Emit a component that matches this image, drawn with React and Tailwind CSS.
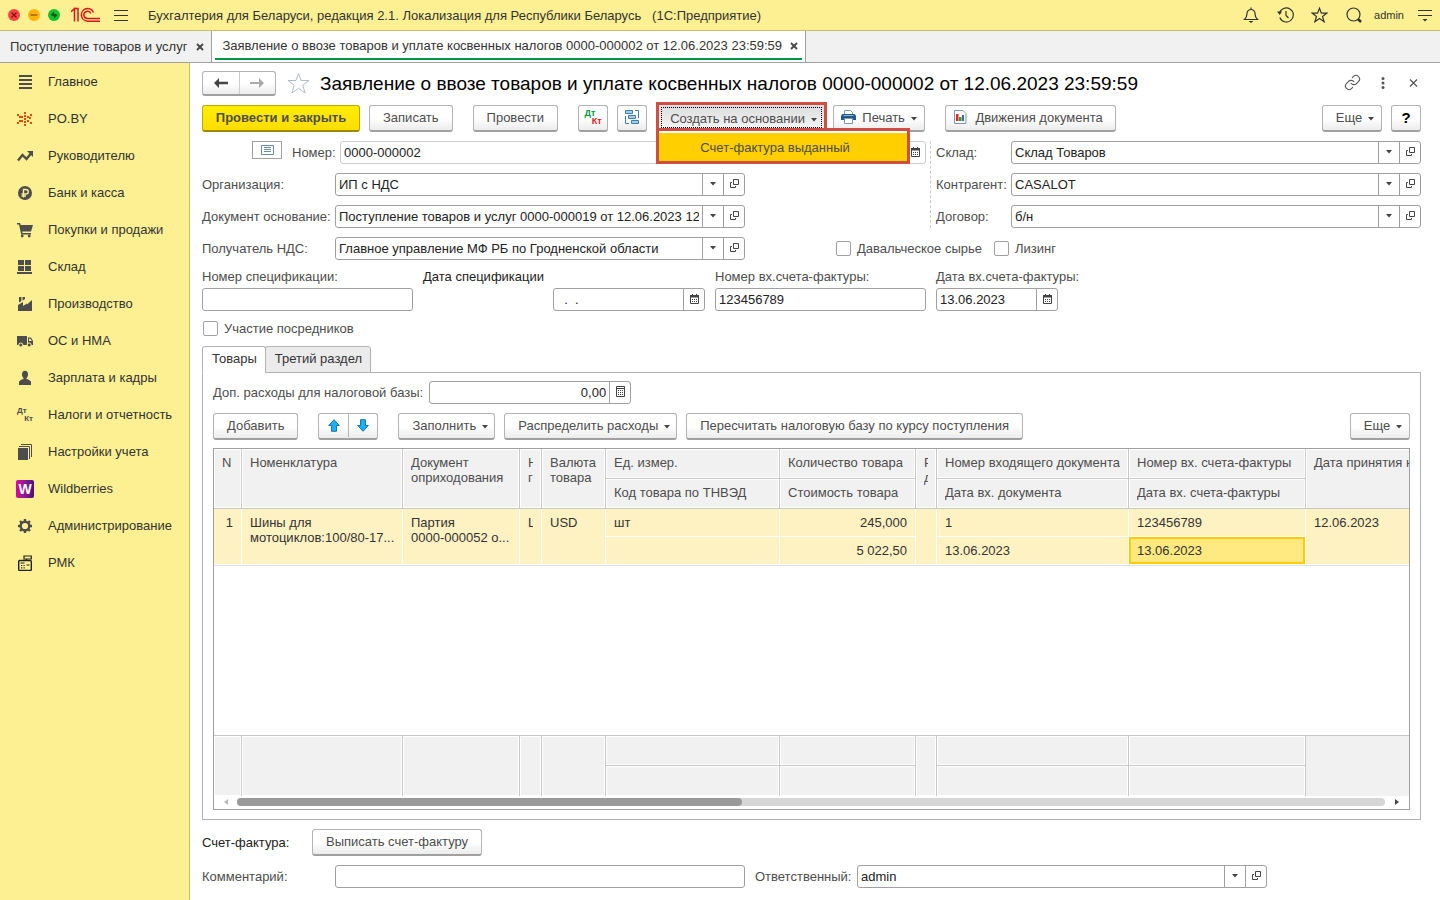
import React, { useState } from "react";
import { Link } from "lucide-react";
import clsx from "clsx";

const BUTTON =
  "flex h-[27px] shrink-0 items-center justify-center whitespace-nowrap rounded-[3px] border border-b-2 border-[#b3b3b3] border-b-[#a0a0a0] bg-linear-to-b from-white from-50% to-[#ececec] pb-0.5 text-[#4d4d4d]";

const MENU = [
  { label: "Главное", icon: "main" },
  { label: "PO.BY", icon: "poby" },
  { label: "Руководителю", icon: "trend" },
  { label: "Банк и касса", icon: "bank" },
  { label: "Покупки и продажи", icon: "cart" },
  { label: "Склад", icon: "stock" },
  { label: "Производство", icon: "factory" },
  { label: "ОС и НМА", icon: "truck" },
  { label: "Зарплата и кадры", icon: "person" },
  { label: "Налоги и отчетность", icon: "tax" },
  { label: "Настройки учета", icon: "books" },
  { label: "Wildberries", icon: "wb" },
  { label: "Администрирование", icon: "gear" },
  { label: "РМК", icon: "cash" },
];

const PO_DOTS = [
  [7, 1], [7, 4], [7, 7], [7, 10], [7, 13],
  [4, 5], [4, 9], [10, 5], [10, 9],
  [0, 3], [2, 5], [0, 11], [2, 9], [13, 3], [12, 6], [13, 11],
];

const ICONS = {
  main: <path d="M2 2h13M2 6h13M2 10h13M2 14h13" stroke="#4d4d4d" strokeWidth="2" />,
  poby: PO_DOTS.map(([x, y]) => (
    <rect key={`${x}-${y}`} x={x} y={y} width="2" height="2" fill="#e8470a" />
  )),
  trend: (
    <>
      <path d="M1 12.500 5.500 7l4 4 4-5" fill="none" stroke="#4d4d4d" strokeWidth="2.400" />
      <path d="M10 3h6v6z" fill="#4d4d4d" />
    </>
  ),
  bank: (
    <>
      <circle cx="8" cy="8" r="7" fill="#4d4d4d" />
      <path d="M6.500 12.500v-8H9a2.200 2.200 0 0 1 0 4.500H4.500M4.500 11H9" fill="none" stroke="#fcf092" strokeWidth="1.400" />
    </>
  ),
  cart: (
    <>
      <path d="M0 1h3l.700 2H16l-2 6.500H5.200l.300 1.500H14v1.500H4.200L2 2.600H0z" fill="#4d4d4d" />
      <circle cx="5.200" cy="14" r="1.400" fill="#4d4d4d" />
      <circle cx="12.200" cy="14" r="1.400" fill="#4d4d4d" />
    </>
  ),
  stock: <path d="M1 1h6v5H1zM8 1h6v5H8zM1 7h6v5H1zM8 7h6v5H8zM0 13h15v2H0z" fill="#4d4d4d" />,
  factory: <path d="M1 15V9l5-3v4l4-2.500v1L15 4v11zM2 1h2.400v4L2 6.500zM5.500 1H8v2L5.500 4.600z" fill="#4d4d4d" />,
  truck: (
    <>
      <path d="M0 3h10v9H0zM11 4.500h3l2 3.500v4h-5z" fill="#4d4d4d" />
      <path d="M12 5.700h1.500l1.300 2.300H12z" fill="#fcf092" />
      <circle cx="3.800" cy="12" r="2" fill="#4d4d4d" stroke="#fcf092" />
      <circle cx="12.200" cy="12" r="2" fill="#4d4d4d" stroke="#fcf092" />
    </>
  ),
  person: (
    <>
      <ellipse cx="8" cy="4.500" rx="3" ry="3.700" fill="#4d4d4d" />
      <path d="M6.500 7h3v3h-3z" fill="#4d4d4d" />
      <path d="M2 15v-3.500L5 9.200h6l3 2.300V15z" fill="#4d4d4d" />
    </>
  ),
  books: (
    <>
      <path d="M1 4h10v12H1z" fill="#4d4d4d" />
      <path d="M2 2.500h10.500V15M4 .500h10.500V13" fill="none" stroke="#4d4d4d" />
    </>
  ),
  gear: (
    <>
      <circle cx="8" cy="8" r="4.300" fill="none" stroke="#4d4d4d" strokeWidth="2.400" />
      <path
        d="M8 1v3M8 12v3M1 8h3M12 8h3M3 3l2 2M11 11l2 2M3 13l2-2M11 5l2-2"
        stroke="#4d4d4d"
        strokeWidth="2.400"
      />
    </>
  ),
  cash: (
    <>
      <rect x="1.700" y="5.500" width="12.600" height="10" rx="1" fill="none" stroke="#222" strokeWidth="1.400" />
      <path d="M7 1h7.300v3H7zM9.500 5.500V4M3.500 8h4" fill="none" stroke="#222" strokeWidth="1.200" />
      <path d="M4 10.500h1.200M6.500 10.500h1.200M4 12.800h1.200M6.500 12.800h1.200M9.500 10h3" stroke="#222" strokeWidth="1.200" />
    </>
  ),
};

function MenuIcon({ name }) {
  if (name === "wb") {
    return (
      <span className="flex size-[18px] items-center justify-center rounded-xs bg-linear-to-r from-[#d800a0] to-[#4b0b7c] text-[14px] leading-none font-bold text-white">
        W
      </span>
    );
  }
  if (name === "tax") {
    return (
      <span className="flex w-4 flex-col text-[8px] leading-[8px] font-bold text-[#4d4d4d]">
        <span>Дт</span>
        <span className="self-end">Кт</span>
      </span>
    );
  }
  return (
    <svg width="16" height="16" viewBox="0 0 16 16">
      {ICONS[name]}
    </svg>
  );
}

function Caret({ className }) {
  return (
    <svg width="6" height="4" viewBox="0 0 6 4" className={clsx("shrink-0", className)}>
      <path d="M0 0h6L3 3.500z" fill="#444" />
    </svg>
  );
}

function OpenIcon() {
  return (
    <svg width="9" height="9" viewBox="0 0 9 9" fill="none" stroke="#444">
      <path d="M3.500.500h5v5h-5zM2 3.500H.500v5h5V7" />
    </svg>
  );
}

function CalendarIcon() {
  return (
    <svg width="9" height="10" viewBox="0 0 9 10">
      <path d="M.500 1.500h8v8h-8z" fill="none" stroke="#444" />
      <path d="M0 1h9v2.500H0zM2 0h1v2H2zM6 0h1v2H6z" fill="#444" />
      <path d="M2 5.500h5M2 7.500h5" stroke="#444" strokeDasharray="1 1" />
    </svg>
  );
}

function CalculatorIcon() {
  return (
    <svg width="9" height="11" viewBox="0 0 9 11" fill="none" stroke="#444">
      <path d="M.500.500h8v10h-8zM1 2.500h7" />
      <path d="M2 4.500h5M2 6.500h5M2 8.500h5" strokeDasharray="1 1" />
    </svg>
  );
}

const FIELD_ICONS = {
  list: { label: "Выбрать", node: <Caret /> },
  open: { label: "Открыть", node: <OpenIcon /> },
  calendar: { label: "Календарь", node: <CalendarIcon /> },
  calculator: { label: "Калькулятор", node: <CalculatorIcon /> },
};

function Field({ id, value = "", icons = [], className, inputClass }) {
  const [text, setText] = useState(value);

  return (
    <div className={clsx("flex h-[23px] rounded-[3px] border bg-white", className)}>
      <input
        id={id}
        value={text}
        onChange={(e) => setText(e.target.value)}
        className={clsx("w-0 min-w-0 flex-1 bg-transparent text-[#222] outline-none", inputClass || "px-[3px]")}
      />
      {icons.map((icon) => (
        <button
          key={icon}
          aria-label={FIELD_ICONS[icon].label}
          className="flex w-[21px] shrink-0 items-center justify-center border-l border-[#a0a0a0] pb-0.5"
        >
          {FIELD_ICONS[icon].node}
        </button>
      ))}
    </div>
  );
}

function LabeledRow({ id, label, value, labelClass = "w-[133px]", fieldClass = "w-[410px]" }) {
  return (
    <div className="flex items-center">
      <label htmlFor={id} className={clsx("shrink-0 whitespace-nowrap", labelClass)}>
        {label}
      </label>
      <Field id={id} value={value} icons={["list", "open"]} className={clsx("border-[#a0a0a0]", fieldClass)} />
    </div>
  );
}

function Checkbox({ label }) {
  return (
    <label className="flex items-center gap-1.5 pl-px">
      <input type="checkbox" className="size-[15px] appearance-none rounded-xs border border-[#a0a0a0] bg-white checked:bg-[#ffcc00]" />
      {label}
    </label>
  );
}

function MoreButton() {
  return (
    <button className={clsx(BUTTON, "w-15 gap-1.5 pl-1.5")}>
      Еще <Caret className="mt-1" />
    </button>
  );
}

function TopBar() {
  return (
    <header className="flex h-[31px] items-center border-b border-[#c9bd6a] bg-[#fcf092] pr-2 pl-2 text-[#333]">
      <div className="flex gap-2">
        <button aria-label="Закрыть" className="size-3 rounded-full bg-[#fb4646]">
          <svg viewBox="0 0 12 12">
            <path d="m3.500 3.500 5 5m0-5-5 5" stroke="#8c0d0d" strokeWidth="1.400" />
          </svg>
        </button>
        <button aria-label="Свернуть" className="size-3 rounded-full bg-[#fdb40a]">
          <svg viewBox="0 0 12 12">
            <path d="M2.500 6h7" stroke="#a35f00" strokeWidth="1.500" />
          </svg>
        </button>
        <button aria-label="Развернуть" className="size-3 rounded-full bg-[#12c132]">
          <svg viewBox="0 0 12 12">
            <path d="M6 2.500v5L2.500 6zM6 9.500v-5L9.500 6z" fill="#05560f" />
          </svg>
        </button>
      </div>
      <svg width="30" height="16" viewBox="0 0 30 16" className="ml-[11px]" fill="none" stroke="#e2121a" strokeWidth="1.500">
        <path d="M0 4.800 3.500 1.700V14.500M3.500 5V1.500H7v13" />
        <path d="M22.500 5.500A6.300 6.300 0 1 0 16.500 14.200H29M19.800 6.500A3.600 3.600 0 1 0 16.500 11.500H29" />
      </svg>
      <button aria-label="Меню" className="ml-[13px]">
        <svg width="14" height="12" viewBox="0 0 14 12">
          <path d="M0 1.500h14M0 6.500h14M0 11.500h14" stroke="#333" />
        </svg>
      </button>
      <span className="ml-5 whitespace-pre">
        Бухгалтерия для Беларуси, редакция 2.1. Локализация для Республики Беларусь   (1С:Предприятие)
      </span>
      <div className="ml-auto flex items-center">
        <button aria-label="Уведомления">
          <svg width="16" height="16" viewBox="0 0 16 16" fill="none" stroke="#333" strokeWidth="1.200">
            <path d="M1.500 12.500h13c-2-2-2.500-3-2.500-6a4 4 0 0 0-8 0c0 3-.500 4-2.500 6zM8 .500v2" />
            <path d="M5.500 14h5L8 16z" fill="#333" stroke="none" />
          </svg>
        </button>
        <button aria-label="История" className="ml-[18px]">
          <svg width="17" height="16" viewBox="0 0 17 16" fill="none" stroke="#333" strokeWidth="1.200">
            <path d="M2.500 6.500a7 7 0 1 1 .300 4M9 4v4.500l2.500 2.500" />
            <path d="M0 4.500h5L2.700 8z" fill="#333" stroke="none" />
          </svg>
        </button>
        <button aria-label="Избранное" className="ml-[17px]">
          <svg width="17" height="16" viewBox="0 0 17 16" fill="none" stroke="#333" strokeWidth="1.200">
            <path d="m8.500 1.200 1.900 5h5.300l-4.200 3.300 1.600 5.200-4.600-3.200-4.600 3.200 1.600-5.200L1.300 6.200h5.300z" />
          </svg>
        </button>
        <button aria-label="Поиск" className="ml-[18px]">
          <svg width="16" height="16" viewBox="0 0 16 16" fill="none" stroke="#333" strokeWidth="1.200">
            <circle cx="7.500" cy="7.500" r="6.500" />
            <path d="m12 12 3 3" strokeWidth="2.500" />
          </svg>
        </button>
        <span className="ml-3 text-[11px]">admin</span>
        <button aria-label="Настройки" className="ml-3.5">
          <svg width="14" height="14" viewBox="0 0 14 14">
            <path d="M0 2.500h14M0 7.500h14" stroke="#333" />
            <path d="M4.500 11h5L7 13.500z" fill="#333" />
          </svg>
        </button>
      </div>
    </header>
  );
}

function WindowTabs() {
  return (
    <nav className="flex h-8 border-b border-[#a0a0a0] bg-[#f1f1f1] text-[#333]">
      <div className="flex items-center gap-[9px] border-r border-[#a0a0a0] pr-[7px] pl-2.5">
        <a href="#receipt">Поступление товаров и услуг</a>
        <CloseTab />
      </div>
      <div className="flex border-r border-[#a0a0a0] bg-white px-[3px]">
        <div className="mb-0.5 flex items-center gap-2 border-b-2 border-[#009646] pt-0.5 pr-1 pl-[7px]">
          <a href="#statement">
            Заявление о ввозе товаров и уплате косвенных налогов 0000-000002 от 12.06.2023 23:59:59
          </a>
          <CloseTab />
        </div>
      </div>
    </nav>
  );
}

function CloseTab() {
  return (
    <button aria-label="Закрыть вкладку">
      <svg width="8" height="8" viewBox="0 0 8 8">
        <path d="m1 1 6 6m0-6L1 7" stroke="#444" strokeWidth="1.800" />
      </svg>
    </button>
  );
}

function Sidebar() {
  return (
    <aside className="w-[190px] shrink-0 border-r border-[#c9bd6a] bg-[#fcf092]">
      <ul>
        {MENU.map((item) => (
          <li key={item.label}>
            <a href="#section" className="flex h-[37px] items-center text-[#333]">
              <span className="flex w-12 items-center justify-center pl-0.5">
                <MenuIcon name={item.icon} />
              </span>
              {item.label}
            </a>
          </li>
        ))}
      </ul>
    </aside>
  );
}

function TitleRow() {
  return (
    <div className="flex h-[25px] items-center">
      <div className="flex h-[25px] w-[74px] shrink-0 rounded-[3px] border border-b-2 border-[#b3b3b3] border-b-[#a0a0a0] bg-linear-to-b from-white from-50% to-[#ececec]">
        <button aria-label="Назад" className="flex flex-1 items-center justify-center border-r border-[#ccc]">
          <svg width="14" height="10" viewBox="0 0 14 10">
            <path d="M0 5 5 0v3.800h9v2.400H5V10z" fill="#444" />
          </svg>
        </button>
        <button aria-label="Вперед" className="flex flex-1 items-center justify-center">
          <svg width="14" height="10" viewBox="0 0 14 10">
            <path d="M14 5 9 0v4H0v2h9v4z" fill="#aaa" />
          </svg>
        </button>
      </div>
      <button aria-label="В избранное" className="ml-[11px] shrink-0">
        <svg width="23" height="23" viewBox="0 0 23 23" fill="none" stroke="#b4bcc6">
          <path d="m11.500 1.500 2.600 7h7.900l-6.200 4.700 2.300 7.800-6.600-4.700L4.900 21l2.300-7.800L1 8.500h7.900z" />
        </svg>
      </button>
      <h1 className="ml-2.5 text-[19px] leading-[25px] whitespace-nowrap text-black">
        Заявление о ввозе товаров и уплате косвенных налогов 0000-000002 от 12.06.2023 23:59:59
      </h1>
      <div className="ml-auto flex items-center pr-[3px] pb-0.5 text-[#555]">
        <button aria-label="Ссылка">
          <Link size={17} strokeWidth={1.5} />
        </button>
        <button aria-label="Действия" className="ml-5">
          <svg width="4" height="12" viewBox="0 0 4 12" fill="#555">
            <circle cx="2" cy="1.500" r="1.500" />
            <circle cx="2" cy="6" r="1.500" />
            <circle cx="2" cy="10.500" r="1.500" />
          </svg>
        </button>
        <button aria-label="Закрыть форму" className="ml-6">
          <svg width="9" height="8" viewBox="0 0 9 8">
            <path d="m1 .500 7 7m0-7-7 7" stroke="#555" strokeWidth="1.200" />
          </svg>
        </button>
      </div>
    </div>
  );
}

function CommandBar() {
  const [isOpen, setIsOpen] = useState(true);

  return (
    <div className="mt-[9px] flex h-[27px] gap-[9px]">
      <button className="flex h-[27px] w-[158px] shrink-0 items-center justify-center rounded-[3px] border border-b-2 border-[#bba800] border-b-[#998a00] bg-linear-to-b from-[#ffee00] to-[#ffdd00] pb-0.5 font-bold text-[#4d4d4d]">
        Провести и закрыть
      </button>
      <button className={clsx(BUTTON, "px-[13px]")}>Записать</button>
      <button className={clsx(BUTTON, "ml-[11px] px-[13px]")}>Провести</button>
      <button aria-label="Дт Кт" className={clsx(BUTTON, "ml-[11px] w-[30px]")}>
        <span className="flex w-[17px] flex-col text-[9px] leading-[8px] font-bold">
          <span className="self-start text-[#00963c]">Дт</span>
          <span className="self-end text-[#e32222]">Кт</span>
        </span>
      </button>
      <button aria-label="Структура подчиненности" className={clsx(BUTTON, "w-[30px]")}>
        <svg width="16" height="16" viewBox="0 0 16 16" fill="#a9cbe6" stroke="#3d7eaa">
          <path d="M1.500 1.500h7v3h-7zM4.500 6.500h7v3h-7zM7.500 11.500h7v3h-7z" />
          <path d="M11 1.500h3.500V9M1.500 7v7.500H5" fill="none" />
        </svg>
      </button>

      {/* Создать на основании */}
      <div className="relative -mt-[3px] -mr-[3px] h-[29px] shrink-0 border-3 border-[#d04f45]">
        <button
          onClick={() => setIsOpen(!isOpen)}
          className="flex h-full w-[165px] items-start justify-center bg-linear-to-b from-[#dcdcdc] to-[#f4f4f4] p-0.5 text-[#4d4d4d]"
        >
          <span className="flex h-[21px] w-full items-center justify-center gap-1.5 border border-dotted border-black pt-px pl-1 whitespace-nowrap">
            Создать на основании <Caret className="mt-1" />
          </span>
        </button>
        {isOpen && (
          <div className="absolute top-[23px] -left-[3px] z-10 w-[254px] border-3 border-[#d04f45] bg-white pt-0.5">
            <button className="flex h-7 w-full items-center justify-center bg-[#ffcf00] pr-4 text-[#4d4d4d]">
              Счет-фактура выданный
            </button>
          </div>
        )}
      </div>

      <button className={clsx(BUTTON, "w-[92px] gap-1.5")}>
        <svg width="15" height="14" viewBox="0 0 15 14">
          <path d="M3.500 5V.500h6l2 2V5" fill="#fff" stroke="#7d96ad" />
          <path d="M0 5.500 1.500 4h12L15 5.500V10H0z" fill="#235a8c" />
          <path d="M2.500 5.500h10" stroke="#8fb4d4" />
          <path d="M3.500 8.500h8v5h-8z" fill="#fff" stroke="#7d96ad" />
        </svg>
        <span>Печать</span>
        <Caret className="mt-1" />
      </button>
      <button className={clsx(BUTTON, "ml-[11px] w-[171px] gap-2 pr-1")}>
        <svg width="13" height="14" viewBox="0 0 13 14">
          <path d="M.500.500h8.500l3 3v10H.500z" fill="#fff" stroke="#7d96ad" />
          <path d="M2 4h2.500v7H2z" fill="#e22" />
          <path d="M5 7h2.500v4H5z" fill="#2a9a3a" />
          <path d="M8 5h2v6H8z" fill="#2a6fb5" />
        </svg>
        Движения документа
      </button>
      <div className="ml-auto flex gap-[9px]">
        <MoreButton />
        <button className={clsx(BUTTON, "w-[30px] text-[15px] font-bold text-black")}>?</button>
      </div>
    </div>
  );
}

function DocumentFields() {
  return (
    <div className="mt-[9px] text-[#4d4d4d]">
      <div className="flex">
        <div className="flex w-[724px] shrink-0 flex-col gap-[9px]">
          <div className="flex items-center">
            <button
              aria-label="Режим номера"
              className="mr-2.5 ml-[50px] flex h-[18px] w-[30px] items-center justify-center self-start border border-[#a0a0a0]"
            >
              <svg width="13" height="10" viewBox="0 0 13 10" fill="none" stroke="#6f8aa5">
                <path d="M.500.500h12v9H.500zM3 2.500h7M3 4.500h7M3 6.500h7" />
              </svg>
            </button>
            <label htmlFor="number" className="w-12 whitespace-nowrap">
              Номер:
            </label>
            <Field id="number" value="0000-000002" icons={["calendar"]} className="flex-1 border-[#ccc]" />
          </div>
          <LabeledRow id="org" label="Организация:" value="ИП с НДС" />
          <LabeledRow
            id="base"
            label="Документ основание:"
            value="Поступление товаров и услуг 0000-000019 от 12.06.2023 12"
          />
        </div>
        <div className="ml-1 w-[6px] border-l border-dashed border-[#ccc]" />
        <div className="flex min-w-0 flex-1 flex-col gap-[9px]">
          <LabeledRow id="store" label="Склад:" value="Склад Товаров" labelClass="w-[75px]" fieldClass="flex-1" />
          <LabeledRow id="partner" label="Контрагент:" value="CASALOT" labelClass="w-[75px]" fieldClass="flex-1" />
          <LabeledRow id="contract" label="Договор:" value="б/н" labelClass="w-[75px]" fieldClass="flex-1" />
        </div>
      </div>

      <div className="mt-[9px] flex items-center">
        <LabeledRow id="receiver" label="Получатель НДС:" value="Главное управление МФ РБ по Гродненской области" />
        <div className="ml-[90px] flex gap-[11px]">
          <Checkbox label="Давальческое сырье" />
          <Checkbox label="Лизинг" />
        </div>
      </div>

      <div className="mt-[9px] flex gap-2.5">
        <div className="flex w-[211px] flex-col gap-1">
          <label htmlFor="spec">Номер спецификации:</label>
          <Field id="spec" className="border-[#a0a0a0]" />
        </div>
        <div className="flex w-[282px] flex-col gap-1">
          <label htmlFor="specDate" className="text-[#222]">
            Дата спецификации
          </label>
          <Field id="specDate" value="  .  ." icons={["calendar"]} className="w-[152px] self-end border-[#a0a0a0]" />
        </div>
        <div className="flex w-[211px] flex-col gap-1">
          <label htmlFor="invoice">Номер вх.счета-фактуры:</label>
          <Field id="invoice" value="123456789" className="border-[#a0a0a0]" />
        </div>
        <div className="flex flex-col gap-1">
          <label htmlFor="invoiceDate">Дата вх.счета-фактуры:</label>
          <Field id="invoiceDate" value="13.06.2023" icons={["calendar"]} className="w-[122px] border-[#a0a0a0]" />
        </div>
      </div>

      <div className="mt-2.5 flex">
        <Checkbox label="Участие посредников" />
      </div>
    </div>
  );
}

function HeadCell({ children, tall }) {
  return (
    <th
      rowSpan={tall ? 2 : 1}
      className="h-[30px] border-r border-b border-[#c8c8c8] bg-[#f1f1f1] px-2 pt-1.5 text-left align-top font-normal text-[#4d4d4d] shadow-[inset_0_0_0_1px_#fff]"
    >
      <div className="overflow-hidden whitespace-nowrap">{children}</div>
    </th>
  );
}

function BodyCell({ children, tall, right }) {
  return (
    <td
      rowSpan={tall ? 2 : 1}
      className={clsx(
        "h-7 border-r border-b border-white bg-[#fff2c2] px-2 pt-1.5 align-top whitespace-nowrap text-[#333]",
        right && "text-right"
      )}
    >
      <div className="overflow-hidden">{children}</div>
    </td>
  );
}

function FootCell({ tall, last }) {
  return (
    <td
      rowSpan={tall ? 2 : 1}
      className={clsx(
        "h-[30px] border-r border-[#c8c8c8] bg-[#f1f1f1] shadow-[inset_0_0_0_1px_#fff]",
        !tall && !last && "border-b"
      )}
    />
  );
}

function GoodsTable() {
  return (
    <div className="mt-2 border border-[#a0a0a0] bg-white">
      <div className="overflow-hidden">
        <table className="w-full table-fixed border-separate border-spacing-0">
          <colgroup>
            <col className="w-7" />
            <col className="w-[161px]" />
            <col className="w-[117px]" />
            <col className="w-[22px]" />
            <col className="w-16" />
            <col className="w-[174px]" />
            <col className="w-[136px]" />
            <col className="w-[21px]" />
            <col className="w-48" />
            <col className="w-[177px]" />
            <col />
          </colgroup>
          <thead>
            <tr>
              <HeadCell tall>N</HeadCell>
              <HeadCell tall>Номенклатура</HeadCell>
              <HeadCell tall>
                Документ
                <br />
                оприходования
              </HeadCell>
              <HeadCell tall>
                Н<br />г
              </HeadCell>
              <HeadCell tall>
                Валюта
                <br />
                товара
              </HeadCell>
              <HeadCell>Ед. измер.</HeadCell>
              <HeadCell>Количество товара</HeadCell>
              <HeadCell tall>
                Р<br />д
              </HeadCell>
              <HeadCell>Номер входящего документа</HeadCell>
              <HeadCell>Номер вх. счета-фактуры</HeadCell>
              <th
                rowSpan={2}
                className="overflow-hidden border-b border-[#c8c8c8] bg-[#f1f1f1] pt-1.5 pl-2 text-left align-top font-normal whitespace-nowrap text-[#4d4d4d] shadow-[inset_1px_1px_0_#fff]"
              >
                Дата принятия на
              </th>
            </tr>
            <tr>
              <HeadCell>Код товара по ТНВЭД</HeadCell>
              <HeadCell>Стоимость товара</HeadCell>
              <HeadCell>Дата вх. документа</HeadCell>
              <HeadCell>Дата вх. счета-фактуры</HeadCell>
            </tr>
          </thead>
          <tbody>
            <tr>
              <BodyCell tall right>
                1
              </BodyCell>
              <BodyCell tall>
                Шины для
                <br />
                мотоциклов:100/80-17...
              </BodyCell>
              <BodyCell tall>
                Партия
                <br />
                0000-000052 о...
              </BodyCell>
              <BodyCell tall>Ц</BodyCell>
              <BodyCell tall>USD</BodyCell>
              <BodyCell>шт</BodyCell>
              <BodyCell right>245,000</BodyCell>
              <BodyCell tall />
              <BodyCell>1</BodyCell>
              <BodyCell>123456789</BodyCell>
              <td
                rowSpan={2}
                className="border-b border-white bg-[#fff2c2] px-2 pt-1.5 align-top whitespace-nowrap text-[#333]"
              >
                12.06.2023
              </td>
            </tr>
            <tr>
              <BodyCell />
              <BodyCell right>5 022,50</BodyCell>
              <BodyCell>13.06.2023</BodyCell>
              <td className="h-7 border-r border-b border-white bg-[#ffe980] px-2 pt-1.5 align-top text-[#333] shadow-[inset_0_0_0_2px_#ffcc00]">
                13.06.2023
              </td>
            </tr>
            <tr>
              <td colSpan={11} className="h-[171px] border-t border-b border-t-[#e2e2e2] border-b-[#c8c8c8]" />
            </tr>
          </tbody>
          <tfoot>
            <tr>
              <FootCell tall />
              <FootCell tall />
              <FootCell tall />
              <FootCell tall />
              <FootCell tall />
              <FootCell />
              <FootCell />
              <FootCell tall />
              <FootCell />
              <FootCell />
              <td rowSpan={2} className="bg-[#f1f1f1]" />
            </tr>
            <tr>
              <FootCell last />
              <FootCell last />
              <FootCell last />
              <FootCell last />
            </tr>
          </tfoot>
        </table>
      </div>
      <div className="flex h-[13px] items-center px-2.5 pb-px">
        <svg width="4" height="6" viewBox="0 0 4 6" className="mr-[9px]">
          <path d="M4 0v6L0 3z" fill="#bbb" />
        </svg>
        <div className="h-2 flex-1 rounded-full bg-[#d6d6d6]">
          <div className="h-2 w-[44%] rounded-full bg-[#999]" />
        </div>
        <svg width="4" height="6" viewBox="0 0 4 6" className="ml-2.5">
          <path d="M0 0v6l4-3z" fill="#444" />
        </svg>
      </div>
    </div>
  );
}

function GoodsPanel() {
  const [tab, setTab] = useState("goods");
  const tabs = [
    { id: "goods", label: "Товары" },
    { id: "third", label: "Третий раздел" },
  ];

  return (
    <section className="mt-2.5">
      <div className="relative -mb-px flex">
        {tabs.map((t) => (
          <button
            key={t.id}
            onClick={() => setTab(t.id)}
            className={clsx(
              "-mr-px h-[27px] rounded-t-[3px] border border-[#b3b3b3] pr-2 pb-0.5 pl-[9px] text-[#333]",
              tab === t.id ? "border-b-white bg-white" : "bg-[#ebebeb]"
            )}
          >
            {t.label}
          </button>
        ))}
      </div>
      <div className="border border-[#b3b3b3] px-2.5 pt-2 pb-[9px]">
        <div className="flex items-center text-[#4d4d4d]">
          <label htmlFor="expenses" className="mr-1.5">
            Доп. расходы для налоговой базы:
          </label>
          <Field
            id="expenses"
            value="0,00"
            icons={["calculator"]}
            className="w-[202px] border-[#a0a0a0]"
            inputClass="pr-[3px] text-right"
          />
        </div>
        <div className="mt-[9px] flex gap-[9px]">
          <button className={clsx(BUTTON, "px-[13px]")}>Добавить</button>
          <div className={clsx(BUTTON, "mx-[11px] w-15")}>
            <button aria-label="Вверх" className="flex h-6 flex-1 items-center justify-center border-r border-[#b3b3b3]">
              <svg width="12" height="13" viewBox="0 0 12 13">
                <path d="M6 .700 11.300 6.500H8.500v5.800h-5V6.500H.700z" fill="#1cb0f6" stroke="#1878ad" />
              </svg>
            </button>
            <button aria-label="Вниз" className="flex h-6 flex-1 items-center justify-center">
              <svg width="12" height="13" viewBox="0 0 12 13">
                <path d="M6 12.300.700 6.500h2.800V.700h5v5.800h2.800z" fill="#1cb0f6" stroke="#1878ad" />
              </svg>
            </button>
          </div>
          <button className={clsx(BUTTON, "gap-1.5 pr-1.5 pl-[13px]")}>
            Заполнить <Caret className="mt-1" />
          </button>
          <button className={clsx(BUTTON, "gap-1.5 pr-1.5 pl-[13px]")}>
            Распределить расходы <Caret className="mt-1" />
          </button>
          <button className={clsx(BUTTON, "px-[13px]")}>Пересчитать налоговую базу по курсу поступления</button>
          <div className="ml-auto">
            <MoreButton />
          </div>
        </div>
        <GoodsTable />
      </div>
    </section>
  );
}

function Footer() {
  return (
    <footer className="mt-[9px] text-[#4d4d4d]">
      <div className="flex items-center">
        <span className="w-[110px] text-[#222]">Счет-фактура:</span>
        <button className={clsx(BUTTON, "px-[13px]")}>Выписать счет-фактуру</button>
      </div>
      <div className="mt-[9px] flex items-center">
        <label htmlFor="comment" className="w-[133px]">
          Комментарий:
        </label>
        <Field id="comment" className="w-[410px] border-[#a0a0a0]" />
        <label htmlFor="responsible" className="ml-2.5 w-[102px]">
          Ответственный:
        </label>
        <Field id="responsible" value="admin" icons={["list", "open"]} className="w-[410px] border-[#a0a0a0]" />
      </div>
    </footer>
  );
}

function App() {
  return (
    <div className="flex min-h-screen flex-col bg-white font-['Liberation_Sans',sans-serif] text-[13px] leading-[15px]">
      <TopBar />
      <WindowTabs />
      <div className="flex flex-1">
        <Sidebar />
        <main className="min-w-0 flex-1 pt-2 pr-[19px] pb-3 pl-3">
          <TitleRow />
          <CommandBar />
          <DocumentFields />
          <GoodsPanel />
          <Footer />
        </main>
      </div>
    </div>
  );
}

export default App;
